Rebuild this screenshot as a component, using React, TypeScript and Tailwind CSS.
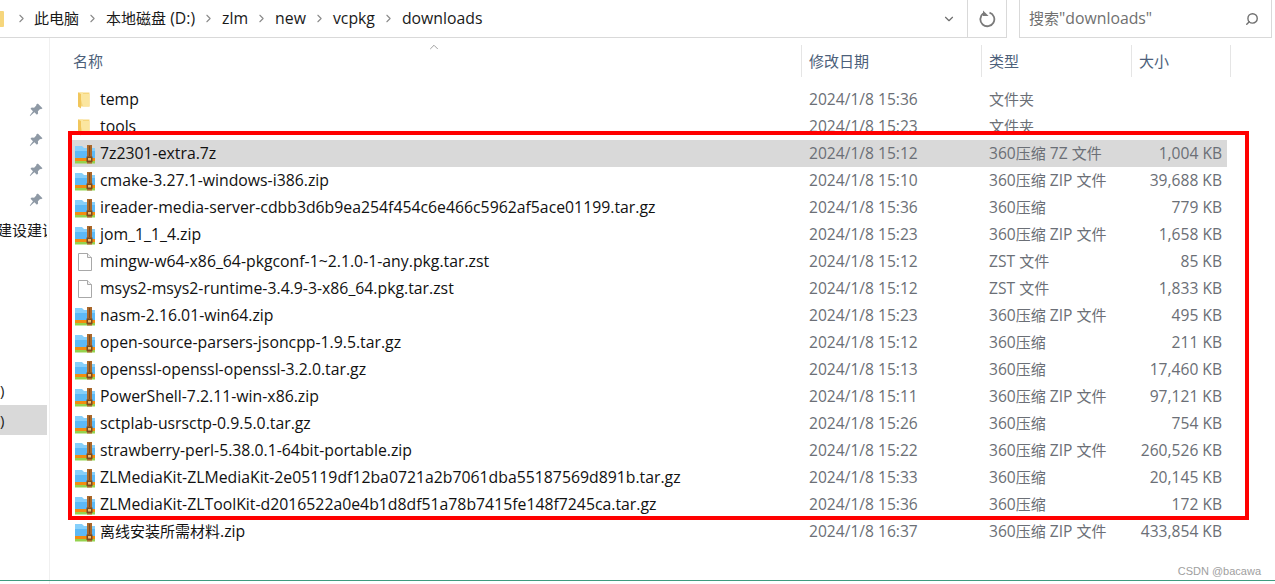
import React from "react";
import { ChevronRight, ChevronDown, ChevronUp, Search } from "lucide-react";

const stack = '"Open Sans", "Noto Sans CJK SC", sans-serif';

interface FileRow {
    name: string
    date: string
    type: string
    size: string
    icon: 'folder' | 'zip' | 'file'
    selected?: boolean
}

const rows: FileRow[] = [
    { name: 'temp', date: '2024/1/8 15:36', type: '文件夹', size: '', icon: 'folder' },
    { name: 'tools', date: '2024/1/8 15:23', type: '文件夹', size: '', icon: 'folder' },
    { name: '7z2301-extra.7z', date: '2024/1/8 15:12', type: '360压缩 7Z 文件', size: '1,004 KB', icon: 'zip', selected: true },
    { name: 'cmake-3.27.1-windows-i386.zip', date: '2024/1/8 15:10', type: '360压缩 ZIP 文件', size: '39,688 KB', icon: 'zip' },
    { name: 'ireader-media-server-cdbb3d6b9ea254f454c6e466c5962af5ace01199.tar.gz', date: '2024/1/8 15:36', type: '360压缩', size: '779 KB', icon: 'zip' },
    { name: 'jom_1_1_4.zip', date: '2024/1/8 15:23', type: '360压缩 ZIP 文件', size: '1,658 KB', icon: 'zip' },
    { name: 'mingw-w64-x86_64-pkgconf-1~2.1.0-1-any.pkg.tar.zst', date: '2024/1/8 15:12', type: 'ZST 文件', size: '85 KB', icon: 'file' },
    { name: 'msys2-msys2-runtime-3.4.9-3-x86_64.pkg.tar.zst', date: '2024/1/8 15:12', type: 'ZST 文件', size: '1,833 KB', icon: 'file' },
    { name: 'nasm-2.16.01-win64.zip', date: '2024/1/8 15:23', type: '360压缩 ZIP 文件', size: '495 KB', icon: 'zip' },
    { name: 'open-source-parsers-jsoncpp-1.9.5.tar.gz', date: '2024/1/8 15:12', type: '360压缩', size: '211 KB', icon: 'zip' },
    { name: 'openssl-openssl-openssl-3.2.0.tar.gz', date: '2024/1/8 15:13', type: '360压缩', size: '17,460 KB', icon: 'zip' },
    { name: 'PowerShell-7.2.11-win-x86.zip', date: '2024/1/8 15:11', type: '360压缩 ZIP 文件', size: '97,121 KB', icon: 'zip' },
    { name: 'sctplab-usrsctp-0.9.5.0.tar.gz', date: '2024/1/8 15:26', type: '360压缩', size: '754 KB', icon: 'zip' },
    { name: 'strawberry-perl-5.38.0.1-64bit-portable.zip', date: '2024/1/8 15:22', type: '360压缩 ZIP 文件', size: '260,526 KB', icon: 'zip' },
    { name: 'ZLMediaKit-ZLMediaKit-2e05119df12ba0721a2b7061dba55187569d891b.tar.gz', date: '2024/1/8 15:33', type: '360压缩', size: '20,145 KB', icon: 'zip' },
    { name: 'ZLMediaKit-ZLToolKit-d2016522a0e4b1d8df51a78b7415fe148f7245ca.tar.gz', date: '2024/1/8 15:36', type: '360压缩', size: '172 KB', icon: 'zip' },
    { name: '离线安装所需材料.zip', date: '2024/1/8 16:37', type: '360压缩 ZIP 文件', size: '433,854 KB', icon: 'zip' },
];

const crumbs = ['此电脑', '本地磁盘 (D:)', 'zlm', 'new', 'vcpkg', 'downloads'];

// CJK runs are 15px in the picture while latin text comes out nearer 16px
const Mixed = ({ text }: { text: string }) => (
    <>
        {text.split(/([\u4e00-\u9fff]+)/).map((part, i) => (
            i % 2 === 1 ? <span key={i} className="text-[15px]">{part}</span> : <span key={i}>{part}</span>
        ))}
    </>
);

const FolderIcon = () => (
    <svg width="20" height="20" viewBox="0 0 20 20">
        <path d="M3 2.5h11.5v14H3z" fill="#f6d67c" />
        <path d="M4 2.5h4v1.5h6.5v12.5H8z" fill="#fbe6a0" />
        <path d="M3 2.5l3 1.5v14.5l-3-2z" fill="#f1c65c" />
    </svg>
);

const ZipIcon = () => (
    <svg width="20" height="20" viewBox="0 0 20 20">
        <path d="M0 2h7l2 2h11v11H0z" fill="#86cffa" />
        <path d="M0 7h20v8H0z" fill="#5cb9f6" />
        <path d="M0 14h20v3H0z" fill="#f28c10" />
        <path d="M0 17h20v2.5H0z" fill="#95d24e" />
        <path d="M12 1h5v18.5h-5z" fill="#a9672a" />
        <path d="M14 2h1v10h-1z" fill="#7c4a1d" />
        <path d="M11.5 12.5h6v5.5h-6z" fill="#7c4a1d" />
        <path d="M13 14h3v2.5h-3z" fill="#eebb6c" />
    </svg>
);

const PlainFileIcon = () => (
    <svg width="20" height="20" viewBox="0 0 20 20">
        <path d="M3.5 1.5h9l4 4v13h-13z" fill="#fff" stroke="#a8a8a8" />
        <path d="M12.5 1.5v4h4" fill="#f0f0f0" stroke="#a8a8a8" />
    </svg>
);

const PinIcon = () => (
    <svg width="14" height="14" viewBox="0 0 14 14" fill="#8e99a5">
        <path d="M8.8.5l4.7 4.7-1.5 1-.9-.2-2.2 2.2.2 2.4-1.2 1.2-2.5-2.5L1.2 13 .8 12.6l3.2-4.3L1.5 5.8l1.2-1.2 2.4.2 2.2-2.2-.2-.9z" />
    </svg>
);

const RefreshIcon = () => (
    <svg width="18" height="18" viewBox="0 0 18 18" fill="none">
        <path d="M5.2 3.6A7 7 0 1 0 11.5 2.6" stroke="#7a7a7a" strokeWidth="1.8" />
        <path d="M5 0.5v5.6h5.6z" fill="#7a7a7a" />
    </svg>
);

const HeaderCell = ({ label, className }: { label: string, className: string }) => (
    <div className={`h-[32px] flex items-center border-l border-[#e5e5e5] pl-[7px] text-[15px] text-[#4c607a] ${className}`}>
        {label}
    </div>
);

export default function App() {
    return (
        <div className="relative w-[1275px] h-[584px] bg-white overflow-hidden flex flex-col" style={{ fontFamily: stack }}>
            {/* address bar */}
            <div className="h-[38px] flex shrink-0">
                <div className="w-[1007px] flex items-center border-b border-r border-[#d9d9d9]">
                    <div className="w-[4px] h-[16px] bg-[#f6d67c] rounded-r-[1px]" />
                    <div className="flex items-center text-[15.8px] text-[#1a1a1a] ml-[11px]">
                        {crumbs.map((c, i) => (
                            <div key={c} className="flex items-center">
                                {i > 0 && <ChevronRight size={13} strokeWidth={2} className="text-[#8a8a8a] mx-[7px]" />}
                                {i === 0 && <ChevronRight size={13} strokeWidth={2} className="text-[#8a8a8a] mr-[6px]" />}
                                <span><Mixed text={c} /></span>
                            </div>
                        ))}
                    </div>
                    <div className="ml-auto flex items-center h-full">
                        <ChevronDown size={14} strokeWidth={2} className="text-[#6d6d6d] mr-[11px]" />
                        <div className="w-[39px] h-full border-l border-[#d9d9d9] flex items-center justify-center">
                            <RefreshIcon />
                        </div>
                    </div>
                </div>
                <div className="w-[12px] shrink-0" />
                <div className="w-[253px] flex items-center justify-between border-l border-r border-b border-[#d9d9d9] pl-[9px] pr-[12px] text-[15.8px] text-[#707070]">
                    <span><Mixed text={'搜索"downloads"'} /></span>
                    <Search size={14} strokeWidth={2.4} className="text-[#707070] -scale-x-100" />
                </div>
            </div>

            <div className="flex flex-1 min-h-0">
                {/* nav pane */}
                <div className="w-[50px] shrink-0 border-r border-[#f0f0f0] pt-[57px] flex flex-col text-[15px] text-[#1a1a1a]">
                    {[0, 1, 2, 3].map((i) => (
                        <div key={i} className="h-[30px] flex items-center justify-end pr-[6px]"><PinIcon /></div>
                    ))}
                    <div className="h-[30px] w-[47px] flex items-center overflow-hidden whitespace-nowrap">
                        <span className="-ml-[3px]">建设建议</span>
                    </div>
                    <div className="h-[130px]" />
                    <div className="h-[30px] flex items-center">)</div>
                    <div className="h-[30px] w-[47px] flex items-center bg-[#d9d9d9]">)</div>
                </div>

                {/* file list */}
                <div className="flex-1 min-w-0 pl-[19px] text-[15.6px]">
                    <div className="relative h-[48px] pt-[7px] flex">
                        <div className="w-[732px] h-[32px] flex items-center pl-[4px] text-[15px] text-[#4c607a]">名称</div>
                        <ChevronUp size={14} strokeWidth={1.4} className="absolute left-[358px] top-[2px] text-[#8a8a8a]" />
                        <HeaderCell label="修改日期" className="w-[180px]" />
                        <HeaderCell label="类型" className="w-[150px]" />
                        <HeaderCell label="大小" className="w-[100px] border-r" />
                    </div>
                    <div className="flex flex-col">
                        {rows.map((row) => (
                            <div key={row.name} className={`h-[27px] w-[1158px] flex items-center ${row.selected ? 'bg-[#d9d9d9]' : ''}`}>
                                <div className="w-[732px] flex items-center pl-[6px] gap-[5px] text-[15.8px] text-[#111]">
                                    {row.icon === 'folder' && <FolderIcon />}
                                    {row.icon === 'zip' && <ZipIcon />}
                                    {row.icon === 'file' && <PlainFileIcon />}
                                    <span className="whitespace-nowrap"><Mixed text={row.name} /></span>
                                </div>
                                <div className="w-[180px] pl-[8px] text-[#6b6f76]">{row.date}</div>
                                <div className="w-[140px] pl-[8px] text-[#6b6f76] whitespace-nowrap"><Mixed text={row.type} /></div>
                                <div className="w-[101px] text-right text-[#6b6f76] whitespace-nowrap">{row.size}</div>
                            </div>
                        ))}
                    </div>
                </div>
            </div>

            {/* red highlight drawn over the screenshot */}
            <div className="absolute left-[68px] top-[131px] w-[1181px] h-[389px] border-[4px] border-[#ff0000] pointer-events-none" />
            <div className="absolute right-[14px] bottom-[5px] text-[11px] text-[#a0a0a0]" style={{ fontFamily: '"Liberation Sans", sans-serif' }}>CSDN @bacawa</div>
            <div className="absolute left-0 right-0 bottom-[3px] h-[1px] bg-[#3f9a7f]" />
        </div>
    );
}
